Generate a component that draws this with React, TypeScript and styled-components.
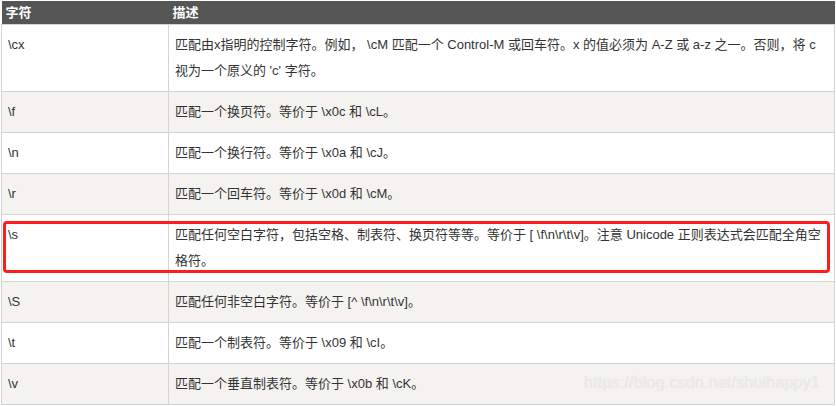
import React from "react";
import styled, { createGlobalStyle } from "styled-components";

const Global = createGlobalStyle`
  html, body { margin: 0; padding: 0; background: #ffffff; }
  body { font-family: "Liberation Sans", "Noto Sans CJK SC", sans-serif; }
`;

const Wrap = styled.div`
  position: relative;
  width: 834px;
  margin: 1px 0 0 1px;
`;

const Table = styled.table`
  width: 834px;
  border-collapse: collapse;
  table-layout: fixed;
  font-size: 13px;
  color: #333333;
`;

const HeadCell = styled.th`
  background: #555555;
  color: #ffffff;
  font-weight: bold;
  text-align: left;
  height: 23px;
  padding: 0 4px;
  line-height: 23px;
  border: none;
`;

const Row = styled.tr<{ $alt: boolean }>`
  background: ${(p) => (p.$alt ? "#f4f3f0" : "#ffffff")};
`;

const Cell = styled.td`
  border: 1px solid #d4d4d4;
  padding: 7px 6px 7px 6px;
  line-height: 26px;
  vertical-align: top;
`;

const Highlight = styled.div`
  position: absolute;
  left: 2px;
  top: 220px;
  width: 821px;
  height: 46px;
  border: 3px solid #ff1c1c;
  border-radius: 4px;
  pointer-events: none;
`;

const Watermark = styled.div`
  position: absolute;
  right: 15px;
  top: 373px;
  font-size: 16px;
  color: #ececec;
  text-shadow: 0 0 1px #dadada;
  letter-spacing: 0.2px;
`;

const rows: [string, string][] = [
  ["\\cx", "匹配由x指明的控制字符。例如， \\cM 匹配一个 Control-M 或回车符。x 的值必须为 A-Z 或 a-z 之一。否则，将 c 视为一个原义的 'c' 字符。"],
  ["\\f", "匹配一个换页符。等价于 \\x0c 和 \\cL。"],
  ["\\n", "匹配一个换行符。等价于 \\x0a 和 \\cJ。"],
  ["\\r", "匹配一个回车符。等价于 \\x0d 和 \\cM。"],
  ["\\s", "匹配任何空白字符，包括空格、制表符、换页符等等。等价于 [ \\f\\n\\r\\t\\v]。注意 Unicode 正则表达式会匹配全角空格符。"],
  ["\\S", "匹配任何非空白字符。等价于 [^ \\f\\n\\r\\t\\v]。"],
  ["\\t", "匹配一个制表符。等价于 \\x09 和 \\cI。"],
  ["\\v", "匹配一个垂直制表符。等价于 \\x0b 和 \\cK。"],
];

export default function App() {
  return (
    <>
      <Global />
      <Wrap>
        <Table>
          <colgroup>
            <col style={{ width: 167 }} />
            <col />
          </colgroup>
          <thead>
            <tr>
              <HeadCell>字符</HeadCell>
              <HeadCell>描述</HeadCell>
            </tr>
          </thead>
          <tbody>
            {rows.map(([k, d], i) => (
              <Row key={k} $alt={i % 2 === 1}>
                <Cell>{k}</Cell>
                <Cell>{d}</Cell>
              </Row>
            ))}
          </tbody>
        </Table>
        <Highlight />
        <Watermark>https://blog.csdn.net/shuihappy1</Watermark>
      </Wrap>
    </>
  );
}
